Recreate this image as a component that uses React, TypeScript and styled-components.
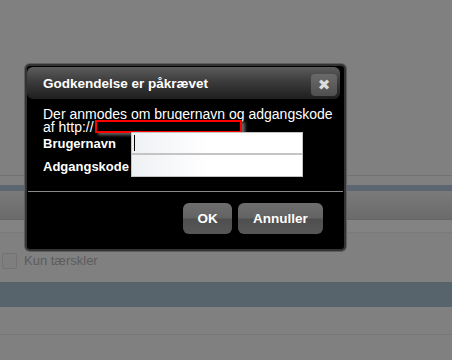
import React from 'react';
import styled, { createGlobalStyle } from 'styled-components';

const GlobalStyle = createGlobalStyle`
  html, body {
    margin: 0;
    padding: 0;
    background: #808080;
  }
  body {
    font-family: 'Liberation Sans', Arial, sans-serif;
  }
`;

const Page = styled.div`
  position: relative;
  width: 452px;
  height: 360px;
  overflow: hidden;
  background: #808080;
  display: flex;
  flex-direction: column;
`;

const TopArea = styled.div`
  height: 175px;
  flex-shrink: 0;
`;

interface IRule {
  color?: string;
}
const Rule = styled.div<IRule>`
  height: 1px;
  flex-shrink: 0;
  background: ${(props) => props.color || '#747474'};
`;

interface IBand {
  h: number;
  bg: string;
}
const Band = styled.div<IBand>`
  height: ${(props) => props.h}px;
  flex-shrink: 0;
  background: ${(props) => props.bg};
`;

const CheckRow = styled.div`
  height: 49px;
  flex-shrink: 0;
  display: flex;
  align-items: center;
  gap: 7px;
  padding-left: 2px;
  padding-top: 6px;
  box-sizing: border-box;
`;

const CheckBox = styled.div`
  width: 13px;
  height: 14px;
  border: 1px solid #737373;
  background: #7e7e7e;
  border-radius: 1px;
`;

const CheckLabel = styled.span`
  font-family: 'Liberation Sans', Arial, sans-serif;
  font-size: 13px;
  color: #5c5c5c;
`;

/* dialog sits over the dimmed page */
const Dialog = styled.div`
  position: absolute;
  left: 25px;
  top: 64px;
  width: 321px;
  height: 187px;
  box-sizing: border-box;
  background: #000;
  border: 2px solid #333;
  border-radius: 5px;
  box-shadow: 0 0 0 1px #5e5e5e;
  display: flex;
  flex-direction: column;
`;

const TitleBar = styled.div`
  margin: 1px 4px 0 0;
  height: 32px;
  flex-shrink: 0;
  border-radius: 6px;
  background: linear-gradient(to bottom, #5c5c5c 0%, #3c3c3c 45%, #1e1e1e 100%);
  display: flex;
  align-items: center;
  justify-content: space-between;
  padding: 0 3px 0 16px;
`;

const Title = styled.div`
  font-family: 'Liberation Sans', Arial, sans-serif;
  font-weight: 700;
  font-size: 13.5px;
  color: #fff;
  margin-top: 1px;
`;

const CloseButton = styled.div`
  width: 26px;
  height: 22px;
  margin-top: 3px;
  border-radius: 4px;
  background: linear-gradient(to bottom, #6a6a6a, #4f4f4f);
  color: #dcdcdc;
  display: flex;
  align-items: center;
  justify-content: center;
  font-family: 'DejaVu Sans', sans-serif;
  font-size: 15px;
  font-weight: 700;
`;

const Body = styled.div`
  padding: 9px 0 0 16px;
  display: flex;
  flex-direction: column;
`;

const Message = styled.div`
  font-family: 'Liberation Sans', Arial, sans-serif;
  font-size: 14px;
  line-height: 13px;
  color: #fff;
`;

const Redacted = styled.span`
  display: inline-block;
  vertical-align: top;
  width: 143px;
  height: 9px;
  margin: -1px 0 0 1px;
  border: 2px solid #ff0000;
  background: #000;
  box-shadow: 3px 2px 3px rgba(140, 140, 140, 0.75);
`;

const FieldGrid = styled.div`
  display: grid;
  grid-template-columns: 88px 172px;
  grid-template-rows: 22px 23px;
  margin-top: -2px;
`;

const FieldLabel = styled.div`
  font-family: 'Liberation Sans', Arial, sans-serif;
  font-weight: 700;
  font-size: 13px;
  color: #fff;
  display: flex;
  align-items: center;
  padding-top: 1px;
`;

interface IField {
  caret?: boolean;
}
const Field = styled.div<IField>`
  position: relative;
  box-sizing: border-box;
  border: 1px solid #c4c4c4;
  background: linear-gradient(to right, #eef1f4 0%, #ffffff 45%);
  &::before {
    content: '';
    display: ${(props) => (props.caret ? 'block' : 'none')};
    position: absolute;
    left: 2px;
    top: 2px;
    bottom: 2px;
    width: 1px;
    background: #000;
  }
`;

const Divider = styled.div`
  height: 1px;
  flex-shrink: 0;
  background: #8a8a8a;
  margin: 14px 1px 0 1px;
`;

const ButtonRow = styled.div`
  display: flex;
  justify-content: flex-end;
  gap: 6px;
  padding: 11px 21px 0 0;
`;

interface IButton {
  w: number;
}
const Button = styled.div<IButton>`
  width: ${(props) => props.w}px;
  height: 31px;
  box-sizing: border-box;
  border-radius: 6px;
  background: linear-gradient(
    to bottom,
    #6e6e6e 0%,
    #636363 48%,
    #4f4f4f 52%,
    #575757 100%
  );
  display: flex;
  align-items: center;
  justify-content: center;
  font-family: 'Liberation Sans', Arial, sans-serif;
  font-weight: 700;
  font-size: 13.5px;
  color: #fff;
`;

export default function App() {
  return (
    <>
      <GlobalStyle />
      <Page>
        <TopArea />
        <Rule color="#737373" />
        <Band h={9} bg="#808080" />
        <Band h={6} bg="#5b6670" />
        <Band h={28} bg="linear-gradient(to bottom, #7a7a7a, #6b6b6b)" />
        <Rule color="#666666" />
        <Band h={12} bg="#838383" />
        <Rule color="#7a7a7a" />
        <CheckRow>
          <CheckBox />
          <CheckLabel>Kun tærskler</CheckLabel>
        </CheckRow>
        <Band h={25} bg="#58646c" />
        <Band h={27} bg="#808080" />
        <Rule color="#777777" />

        <Dialog>
          <TitleBar>
            <Title>Godkendelse er påkrævet</Title>
            <CloseButton>✖</CloseButton>
          </TitleBar>
          <Body>
            <Message>
              Der anmodes om brugernavn og adgangskode
              <br />
              af http://<Redacted />
            </Message>
            <FieldGrid>
              <FieldLabel>Brugernavn</FieldLabel>
              <Field caret />
              <FieldLabel>Adgangskode</FieldLabel>
              <Field />
            </FieldGrid>
          </Body>
          <Divider />
          <ButtonRow>
            <Button w={49}>OK</Button>
            <Button w={85}>Annuller</Button>
          </ButtonRow>
        </Dialog>
      </Page>
    </>
  );
}
